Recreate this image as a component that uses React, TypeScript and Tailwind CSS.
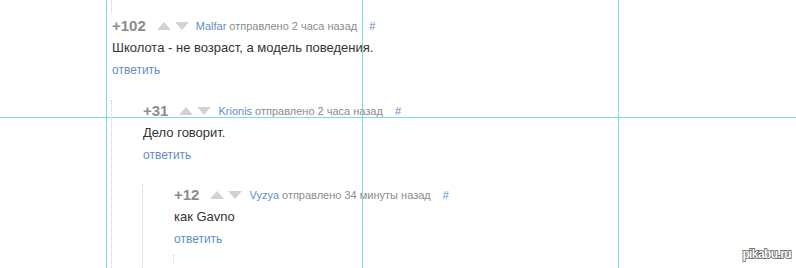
import React from 'react';

interface CommentData {
  score: string;
  author: string;
  time: string;
  text: string;
}

const Arrows = () => (
  <div className="ml-[11px] flex items-center gap-[4px]">
    <svg width="14" height="8" viewBox="0 0 14 8">
      <path d="M0 8 L7 0 L14 8 Z" fill="#d2d2d2" />
    </svg>
    <svg width="14" height="8" viewBox="0 0 14 8">
      <path d="M0 0 L14 0 L7 8 Z" fill="#d2d2d2" />
    </svg>
  </div>
);

const Comment = ({ score, author, time, text }: CommentData) => (
  <div>
    <div className="h-[22px] flex items-center whitespace-nowrap">
      <span className="font-bold text-[15px] text-[#8c8c8c]">{score}</span>
      <Arrows />
      <span className="ml-[7px] text-[11px] text-[#5f8fc4]">{author}</span>
      <span className="ml-[3px] text-[11px] text-[#8c8c8c]">отправлено {time}</span>
      <span className="ml-[12px] text-[11px] text-[#5f8fc4]">#</span>
    </div>
    <div className="h-[22px] flex items-center text-[13px] text-[#333333] whitespace-nowrap">{text}</div>
    <div className="h-[22px] flex items-center text-[12px] text-[#5f8fc4]">ответить</div>
  </div>
);

export default function App() {
  return (
    <div className="relative w-[796px] h-[268px] bg-white overflow-hidden font-['Liberation_Sans',sans-serif]">
      <div className="ml-[111px] h-[13px] border-l border-dotted border-[#cfcfcf]" />
      <div className="ml-[112px] pt-[2px]">
        <Comment
          score="+102"
          author="Malfar"
          time="2 часа назад"
          text="Школота - не возраст, а модель поведения."
        />
      </div>
      <div className="ml-[111px] mt-[19px] pl-[31px] border-l border-dotted border-[#cfcfcf] h-[200px]">
        <Comment score="+31" author="Krionis" time="2 часа назад" text="Дело говорит." />
        <div className="mt-[18px] -ml-px pl-[31px] border-l border-dotted border-[#cfcfcf] h-[120px]">
          <Comment score="+12" author="Vyzya" time="34 минуты назад" text="как Gavno" />
          <div className="mt-[5px] -ml-px h-[8px] border-l border-dotted border-[#cfcfcf]" />
        </div>
      </div>

      {/* guide lines */}
      <div className="absolute left-[106px] top-0 w-px h-full bg-[#7fdde0]" />
      <div className="absolute left-[362px] top-0 w-px h-full bg-[#7fdde0]" />
      <div className="absolute left-[618px] top-0 w-px h-full bg-[#7fdde0]" />
      <div className="absolute left-0 top-[117px] w-full h-px bg-[#7fdde0]" />

      <div className="absolute right-[5px] bottom-[5px] font-bold text-[12px] text-white [-webkit-text-stroke:1.5px_#555] [paint-order:stroke_fill] tracking-[-0.6px]">
        pikabu.ru
      </div>
    </div>
  );
}
